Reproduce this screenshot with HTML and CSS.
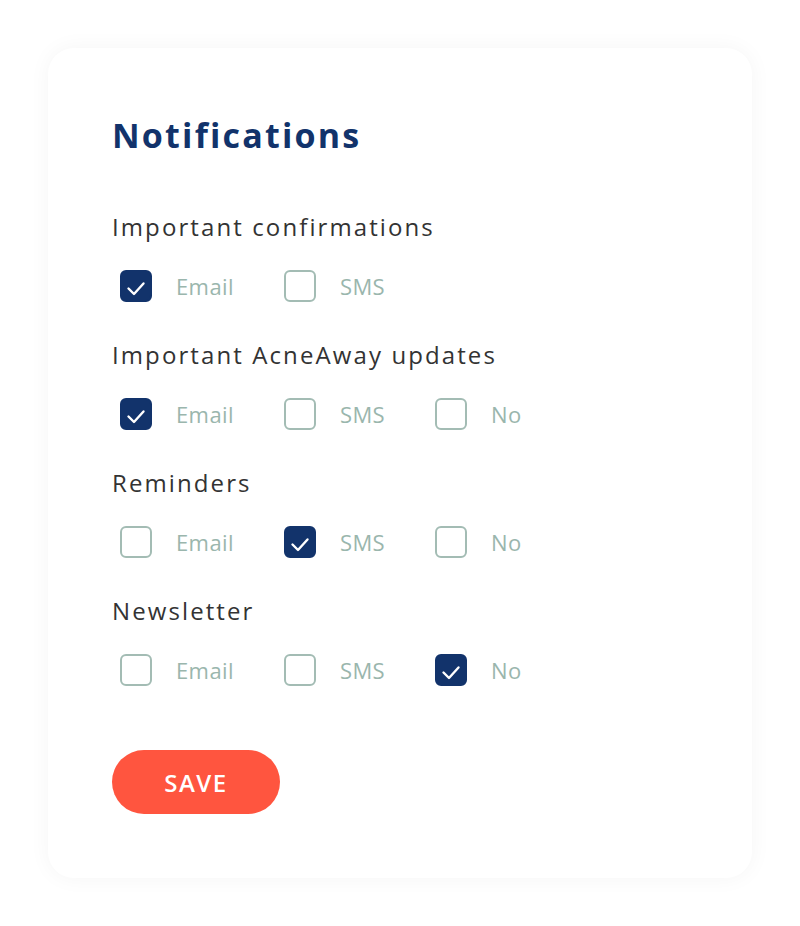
FILE: index.html
```html
<!DOCTYPE html>
<html lang="en">
<head>
<meta charset="utf-8">
<title>Notifications</title>
<link rel="stylesheet" href="styles.css">
</head>
<body>
<div class="card">
  <h1 class="title">Notifications</h1>

  <div class="group">
    <div class="group-label">Important confirmations</div>
    <div class="options">
      <label class="option"><span class="box checked"><svg viewBox="0 0 32 32"><path d="M8.5 18.5l5.5 5.5 9.5-10.5"/></svg></span><span class="opt-text">Email</span></label>
      <label class="option"><span class="box"></span><span class="opt-text">SMS</span></label>
    </div>
  </div>

  <div class="group">
    <div class="group-label">Important AcneAway updates</div>
    <div class="options">
      <label class="option"><span class="box checked"><svg viewBox="0 0 32 32"><path d="M8.5 18.5l5.5 5.5 9.5-10.5"/></svg></span><span class="opt-text">Email</span></label>
      <label class="option"><span class="box"></span><span class="opt-text">SMS</span></label>
      <label class="option"><span class="box"></span><span class="opt-text">No</span></label>
    </div>
  </div>

  <div class="group">
    <div class="group-label">Reminders</div>
    <div class="options">
      <label class="option"><span class="box"></span><span class="opt-text">Email</span></label>
      <label class="option"><span class="box checked"><svg viewBox="0 0 32 32"><path d="M8.5 18.5l5.5 5.5 9.5-10.5"/></svg></span><span class="opt-text">SMS</span></label>
      <label class="option"><span class="box"></span><span class="opt-text">No</span></label>
    </div>
  </div>

  <div class="group">
    <div class="group-label">Newsletter</div>
    <div class="options">
      <label class="option"><span class="box"></span><span class="opt-text">Email</span></label>
      <label class="option"><span class="box"></span><span class="opt-text">SMS</span></label>
      <label class="option"><span class="box checked"><svg viewBox="0 0 32 32"><path d="M8.5 18.5l5.5 5.5 9.5-10.5"/></svg></span><span class="opt-text">No</span></label>
    </div>
  </div>

  <button class="save">SAVE</button>
</div>
</body>
</html>
```

FILE: styles.css
```css
* { box-sizing: border-box; }

html, body {
  margin: 0;
  padding: 0;
  background: #ffffff;
}

body {
  font-family: "Open Sans", "Lato", "Liberation Sans", sans-serif;
  padding: 48px;
}

.card {
  width: 704px;
  min-height: 830px;
  background: #ffffff;
  border-radius: 26px;
  box-shadow: 0 0 22px rgba(0, 0, 0, 0.045);
  padding: 67px 64px 64px 64px;
}

.title {
  margin: 0 0 56px 0;
  font-size: 34px;
  line-height: 40px;
  font-weight: 700;
  color: #12336b;
  letter-spacing: 2.2px;
}

.group {
  margin-bottom: 37px;
}

.group-label {
  font-size: 24px;
  line-height: 32px;
  color: #333333;
  letter-spacing: 2.1px;
  margin-bottom: 27px;
}

.options {
  display: flex;
  gap: 50px;
  padding-left: 8px;
}

.option {
  display: flex;
  align-items: center;
  gap: 24px;
  height: 32px;
}

.box {
  width: 32px;
  height: 32px;
  border: 2px solid #a3bcb4;
  border-radius: 6px;
  display: flex;
  align-items: center;
  justify-content: center;
  flex: none;
}

.box.checked {
  background: #12336b;
  border-color: #12336b;
}

.box svg {
  width: 32px;
  height: 32px;
  flex: none;
}

.box svg path {
  fill: none;
  stroke: #ffffff;
  stroke-width: 2.4;
  stroke-linecap: round;
  stroke-linejoin: round;
}

.opt-text {
  font-size: 22px;
  line-height: 32px;
  color: #9ab6ad;
  letter-spacing: 0.4px;
}

.save {
  margin-top: 27px;
  width: 168px;
  height: 64px;
  border: none;
  border-radius: 32px;
  background: #ff553f;
  color: #ffffff;
  font-family: "Open Sans", "Lato", "Liberation Sans", sans-serif;
  font-size: 24px;
  font-weight: 600;
  letter-spacing: 1.5px;
  cursor: pointer;
}
```
